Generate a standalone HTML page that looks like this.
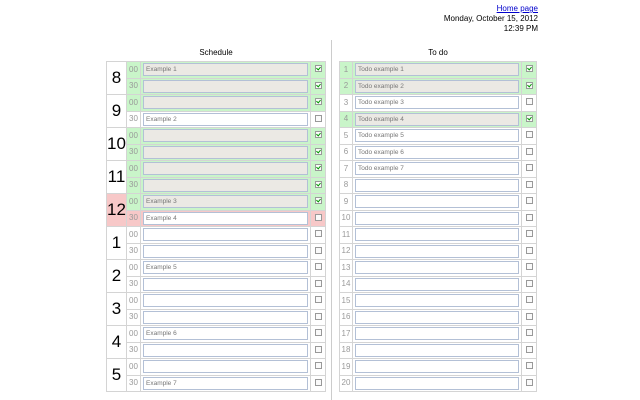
<!DOCTYPE html>
<html><head><meta charset="utf-8"><style>
*{margin:0;padding:0;box-sizing:border-box}
body{width:640px;height:400px;background:#fff;font-family:"Liberation Sans",sans-serif;position:relative;overflow:hidden}
.hdr{position:absolute;right:102px;top:4px;text-align:right;font-size:8px;line-height:10px;color:#000}
.hdr a{color:#00c;text-decoration:underline}
.div{position:absolute;left:331px;top:40px;width:1px;height:360px;background:#ccc}
.tt{position:absolute;top:48px;font-size:8px;text-align:center}
table{position:absolute;top:61px;border-collapse:collapse;table-layout:fixed}
td{border:1px solid #d4d4d4;height:16.5px;padding:0;font-size:7px;color:#888;vertical-align:middle;line-height:14px}
td.h{font-size:17px;color:#000;text-align:center;line-height:20px}
td.m{text-align:center;color:#999;font-size:8px}
td.c{text-align:center}
.in{display:block;height:13px;margin:0 2px;border:1px solid #b3c0d6;background:#fff;font-size:6.5px;color:#777;line-height:11px;padding-left:2px}
.g{background:#c9f5c9}.g .in{background:#ebe9e4}
.r{background:#f7c8c8}
.cb{display:inline-block;width:7px;height:7px;border:1px solid #999;background:#fafafa;vertical-align:middle;position:relative}
.cb.k::after{content:"";position:absolute;left:1px;top:0px;width:2px;height:3px;border:solid #090;border-width:0 1px 1px 0;transform:rotate(40deg)}
</style></head><body>
<div class="hdr"><a>Home page</a><br>Monday, October 15, 2012<br>12:39 PM</div>
<div class="div"></div>
<div class="tt" style="left:106px;width:220px">Schedule</div>
<div class="tt" style="left:339px;width:198px">To do</div>
<table style="left:106px;width:220px">
<colgroup><col style="width:20px"><col style="width:14px"><col><col style="width:15px"></colgroup>
<tr><td class="h" rowspan="2">8</td><td class="m g">00</td><td class="g"><span class="in">Example 1</span></td><td class="c g"><span class="cb k"></span></td></tr>
<tr><td class="m g">30</td><td class="g"><span class="in"></span></td><td class="c g"><span class="cb k"></span></td></tr>
<tr><td class="h" rowspan="2">9</td><td class="m g">00</td><td class="g"><span class="in"></span></td><td class="c g"><span class="cb k"></span></td></tr>
<tr><td class="m">30</td><td><span class="in">Example 2</span></td><td class="c"><span class="cb"></span></td></tr>
<tr><td class="h" rowspan="2">10</td><td class="m g">00</td><td class="g"><span class="in"></span></td><td class="c g"><span class="cb k"></span></td></tr>
<tr><td class="m g">30</td><td class="g"><span class="in"></span></td><td class="c g"><span class="cb k"></span></td></tr>
<tr><td class="h" rowspan="2">11</td><td class="m g">00</td><td class="g"><span class="in"></span></td><td class="c g"><span class="cb k"></span></td></tr>
<tr><td class="m g">30</td><td class="g"><span class="in"></span></td><td class="c g"><span class="cb k"></span></td></tr>
<tr><td class="h r" rowspan="2">12</td><td class="m g">00</td><td class="g"><span class="in">Example 3</span></td><td class="c g"><span class="cb k"></span></td></tr>
<tr><td class="m r">30</td><td class="r"><span class="in">Example 4</span></td><td class="c r"><span class="cb"></span></td></tr>
<tr><td class="h" rowspan="2">1</td><td class="m">00</td><td><span class="in"></span></td><td class="c"><span class="cb"></span></td></tr>
<tr><td class="m">30</td><td><span class="in"></span></td><td class="c"><span class="cb"></span></td></tr>
<tr><td class="h" rowspan="2">2</td><td class="m">00</td><td><span class="in">Example 5</span></td><td class="c"><span class="cb"></span></td></tr>
<tr><td class="m">30</td><td><span class="in"></span></td><td class="c"><span class="cb"></span></td></tr>
<tr><td class="h" rowspan="2">3</td><td class="m">00</td><td><span class="in"></span></td><td class="c"><span class="cb"></span></td></tr>
<tr><td class="m">30</td><td><span class="in"></span></td><td class="c"><span class="cb"></span></td></tr>
<tr><td class="h" rowspan="2">4</td><td class="m">00</td><td><span class="in">Example 6</span></td><td class="c"><span class="cb"></span></td></tr>
<tr><td class="m">30</td><td><span class="in"></span></td><td class="c"><span class="cb"></span></td></tr>
<tr><td class="h" rowspan="2">5</td><td class="m">00</td><td><span class="in"></span></td><td class="c"><span class="cb"></span></td></tr>
<tr><td class="m">30</td><td><span class="in">Example 7</span></td><td class="c"><span class="cb"></span></td></tr>
</table>
<table style="left:339px;width:198px">
<colgroup><col style="width:13px"><col><col style="width:15px"></colgroup>
<tr class="g"><td class="m">1</td><td><span class="in">Todo example 1</span></td><td class="c"><span class="cb k"></span></td></tr>
<tr class="g"><td class="m">2</td><td><span class="in">Todo example 2</span></td><td class="c"><span class="cb k"></span></td></tr>
<tr><td class="m">3</td><td><span class="in">Todo example 3</span></td><td class="c"><span class="cb"></span></td></tr>
<tr class="g"><td class="m">4</td><td><span class="in">Todo example 4</span></td><td class="c"><span class="cb k"></span></td></tr>
<tr><td class="m">5</td><td><span class="in">Todo example 5</span></td><td class="c"><span class="cb"></span></td></tr>
<tr><td class="m">6</td><td><span class="in">Todo example 6</span></td><td class="c"><span class="cb"></span></td></tr>
<tr><td class="m">7</td><td><span class="in">Todo example 7</span></td><td class="c"><span class="cb"></span></td></tr>
<tr><td class="m">8</td><td><span class="in"></span></td><td class="c"><span class="cb"></span></td></tr>
<tr><td class="m">9</td><td><span class="in"></span></td><td class="c"><span class="cb"></span></td></tr>
<tr><td class="m">10</td><td><span class="in"></span></td><td class="c"><span class="cb"></span></td></tr>
<tr><td class="m">11</td><td><span class="in"></span></td><td class="c"><span class="cb"></span></td></tr>
<tr><td class="m">12</td><td><span class="in"></span></td><td class="c"><span class="cb"></span></td></tr>
<tr><td class="m">13</td><td><span class="in"></span></td><td class="c"><span class="cb"></span></td></tr>
<tr><td class="m">14</td><td><span class="in"></span></td><td class="c"><span class="cb"></span></td></tr>
<tr><td class="m">15</td><td><span class="in"></span></td><td class="c"><span class="cb"></span></td></tr>
<tr><td class="m">16</td><td><span class="in"></span></td><td class="c"><span class="cb"></span></td></tr>
<tr><td class="m">17</td><td><span class="in"></span></td><td class="c"><span class="cb"></span></td></tr>
<tr><td class="m">18</td><td><span class="in"></span></td><td class="c"><span class="cb"></span></td></tr>
<tr><td class="m">19</td><td><span class="in"></span></td><td class="c"><span class="cb"></span></td></tr>
<tr><td class="m">20</td><td><span class="in"></span></td><td class="c"><span class="cb"></span></td></tr>
</table>
</body></html>
